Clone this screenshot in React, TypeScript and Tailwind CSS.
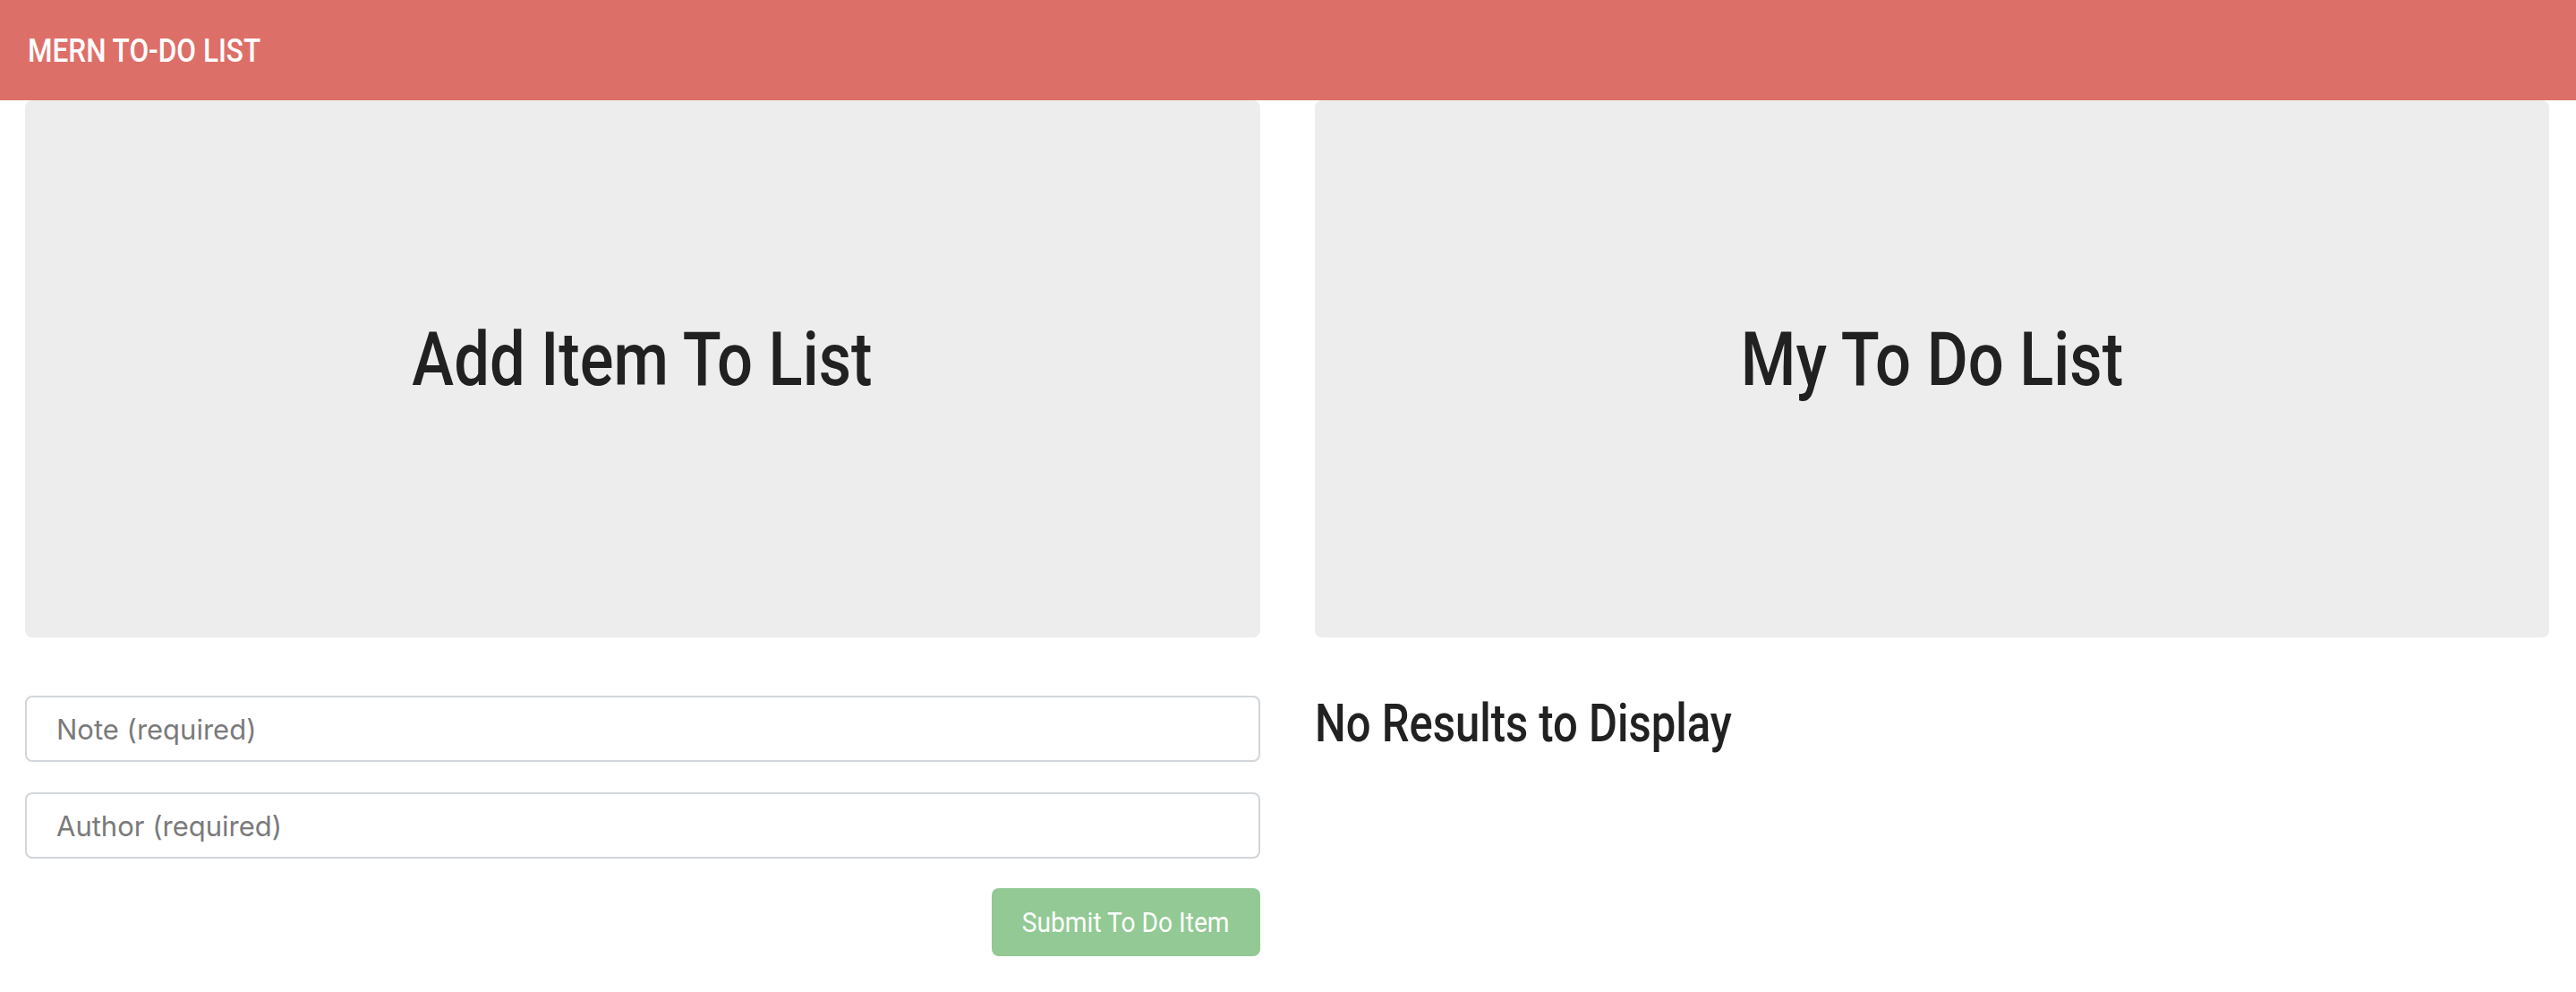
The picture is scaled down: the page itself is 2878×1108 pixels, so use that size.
import React from "react";

const cond = { fontFamily: 'Roboto, "Liberation Sans", sans-serif' };

export default function App() {
  return (
    <div className="min-h-screen bg-white">
      <header className="h-[112px] bg-[#dd6f69] flex items-center pl-[31px]">
        <span style={cond} className="inline-block origin-left scale-x-[0.875] text-white text-[36px] font-medium leading-none pt-[1px] whitespace-nowrap">MERN TO-DO LIST</span>
      </header>
      <main className="grid grid-cols-2 gap-x-[61px] pl-[28px] pr-[30px]">
        <section className="flex flex-col">
          <div className="h-[600px] rounded-[8px] bg-[#ededed] flex items-center justify-center pb-[22px]">
            <h1 style={cond} className="inline-block scale-x-[0.85] text-[83px] font-medium leading-none text-[#212121] whitespace-nowrap">Add Item To List</h1>
          </div>
          <form className="mt-[65px] flex flex-col" onSubmit={(e) => e.preventDefault()}>
            <input
              placeholder="Note (required)"
              style={{ fontFamily: 'Inter, "Noto Sans", sans-serif' }}
              className="h-[74px] rounded-[8px] border-2 border-[#d2d6da] px-[33px] text-[31px] text-[#333] placeholder:text-[#7a7a7a] outline-none"
            />
            <input
              placeholder="Author (required)"
              style={{ fontFamily: 'Inter, "Noto Sans", sans-serif' }}
              className="mt-[34px] h-[74px] rounded-[8px] border-2 border-[#d2d6da] px-[33px] text-[31px] text-[#333] placeholder:text-[#7a7a7a] outline-none"
            />
            <div className="mt-[33px] flex justify-end">
              <button
                type="submit"
                className="w-[300px] h-[76px] rounded-[8px] bg-[#92c994] flex items-center justify-center"
              >
                <span style={cond} className="inline-block scale-x-[0.88] text-white text-[32px] leading-none whitespace-nowrap">Submit To Do Item</span>
              </button>
            </div>
          </form>
        </section>
        <section className="flex flex-col">
          <div className="h-[600px] rounded-[8px] bg-[#ededed] flex items-center justify-center pb-[22px]">
            <h1 style={cond} className="inline-block scale-x-[0.85] text-[83px] font-medium leading-none text-[#212121] whitespace-nowrap">My To Do List</h1>
          </div>
          <div className="mt-[66px]">
            <h2 style={cond} className="inline-block origin-left scale-x-[0.83] text-[59px] font-medium leading-none text-[#212121] whitespace-nowrap">No Results to Display</h2>
          </div>
        </section>
      </main>
    </div>
  );
}
